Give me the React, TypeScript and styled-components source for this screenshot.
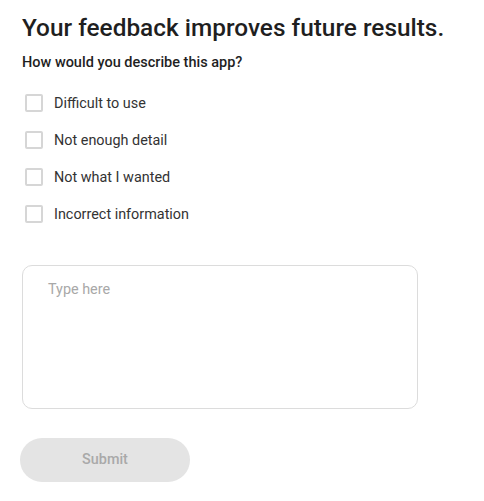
import React from "react";
import styled, { createGlobalStyle } from "styled-components";

const Global = createGlobalStyle`
  html, body { margin: 0; padding: 0; background: #ffffff; }
  body { font-family: Roboto, "Liberation Sans", Arial, sans-serif; }
  * { box-sizing: border-box; }
`;

const Page = styled.div`
  display: flex;
  flex-direction: column;
  padding: 12px 0 0 22px;
  width: 484px;
`;

const Title = styled.h1`
  margin: 0;
  font-size: 24.4px;
  font-weight: 500;
  line-height: 32px;
  color: #1f1f1f;
`;

const Question = styled.h2`
  margin: 9px 0 0;
  font-size: 14.5px;
  font-weight: 500;
  line-height: 20px;
  color: #1f1f1f;
`;

const Options = styled.div`
  display: flex;
  flex-direction: column;
  gap: 19px;
  margin-top: 21px;
  padding-left: 3px;
`;

const Option = styled.label`
  display: flex;
  align-items: center;
  gap: 11px;
  height: 18px;
  font-size: 14.4px;
  color: #333333;
  cursor: pointer;
`;

const Box = styled.span`
  width: 18px;
  height: 18px;
  border: 2px solid #d6d6d6;
  border-radius: 2px;
  flex: none;
`;

const TextArea = styled.textarea`
  margin-top: 42px;
  width: 396px;
  height: 144px;
  border: 1px solid #dcdcdc;
  border-radius: 10px;
  padding: 15px 25px;
  font-family: Roboto, "Liberation Sans", Arial, sans-serif;
  font-size: 14.4px;
  line-height: 18px;
  color: #333;
  resize: none;
  outline: none;
  &::placeholder { color: #a8a8a8; }
`;

const Submit = styled.button`
  margin: 29px 0 0 -2px;
  width: 170px;
  height: 44px;
  border: none;
  border-radius: 22px;
  background: #e4e4e4;
  color: #a9a9a9;
  font-family: Roboto, "Liberation Sans", Arial, sans-serif;
  font-size: 14.4px;
  font-weight: 500;
  line-height: 42px;
  align-self: flex-start;
`;

const options = [
  "Difficult to use",
  "Not enough detail",
  "Not what I wanted",
  "Incorrect information",
];

export default function App() {
  return (
    <>
      <Global />
      <Page>
        <Title>Your feedback improves future results.</Title>
        <Question>How would you describe this app?</Question>
        <Options>
          {options.map((o) => (
            <Option key={o}>
              <Box />
              {o}
            </Option>
          ))}
        </Options>
        <TextArea placeholder="Type here" />
        <Submit disabled>Submit</Submit>
      </Page>
    </>
  );
}
